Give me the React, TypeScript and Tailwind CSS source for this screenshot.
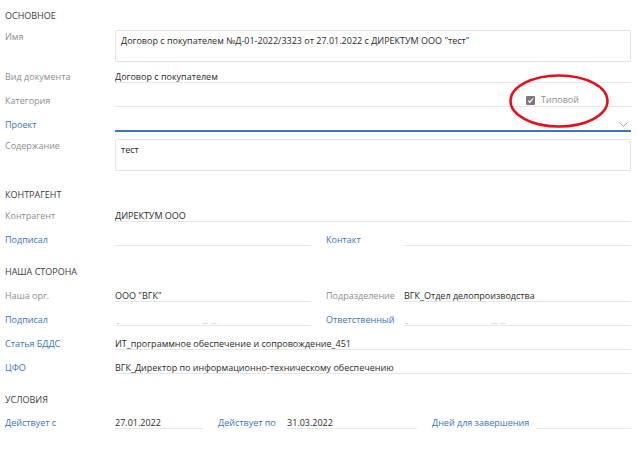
import React from "react";

const font = { fontFamily: '"Open Sans", "Noto Sans", sans-serif' };

interface LabelProp {
    text: string;
    link?: boolean;
    top?: boolean;
    className?: string;
}

const Label: React.FC<LabelProp> = ({ text, link, top, className }) => (
    <div
        className={`shrink-0 leading-[12px] whitespace-nowrap ${top ? "pt-[1px]" : "pt-[6px]"} ${
            link ? "text-[#3a74bb]" : "text-[#8d8d8d]"
        } ${className ?? ""}`}
    >
        {text}
    </div>
);

const Value: React.FC<{ text?: string; className?: string; children?: React.ReactNode }> = ({ text, className, children }) => (
    <div className={`h-[18px] pt-[6px] leading-[12px] border-b border-[#e8e8e8] text-[#2a2a2a] whitespace-nowrap overflow-hidden ${className ?? ""}`}>
        {text}
        {children}
    </div>
);

const Header: React.FC<{ text: string; className?: string }> = ({ text, className }) => (
    <div className={`h-[12px] leading-[12px] text-[#3c3c3c] uppercase ${className ?? ""}`}>{text}</div>
);

const Row: React.FC<{ label: string; link?: boolean; value?: string; children?: React.ReactNode }> = ({ label, link, value, children }) => (
    <div className="flex h-[24px]">
        <Label text={label} link={link} className="w-[110px]" />
        {children ?? <Value text={value} className="flex-1" />}
    </div>
);

const Masked: React.FC = () => (
    <div className="flex items-end gap-[3px] h-[10px] pl-[2px]">
        <span className="w-[2px] h-[1px] bg-[#d0d0d0]" />
        <span className="ml-[80px] w-[6px] h-[1px] bg-[#e0e0e0]" />
        <span className="w-[6px] h-[1px] bg-[#e0e0e0]" />
    </div>
);

const App: React.FC = () => {
    return (
        <div className="relative w-[638px] h-[451px] bg-white text-[9px] pl-[5px] pr-[7px] pt-[10px] overflow-hidden" style={font}>
            {/* Основное */}
            <Header text="Основное" />
            <div className="flex mt-[8px]">
                <Label text="Имя" top className="w-[110px]" />
                <div className="flex-1 h-[32px] border border-[#e3e3e3] rounded-[2px] px-[5px] pt-[4px] leading-[12px] text-[#2a2a2a]">
                    Договор с покупателем №Д-01-2022/3323 от 27.01.2022 с ДИРЕКТУМ ООО "тест"
                </div>
            </div>
            <div className="mt-[3px]">
                <Row label="Вид документа" value="Договор с покупателем" />
                <Row label="Категория">
                    <Value className="flex-1 flex justify-end pr-[52px]">
                        <span className="flex items-center gap-[6px] text-[#8d8d8d] -mt-[1px]">
                            <span className="w-[9px] h-[9px] bg-[#7a7a7a] rounded-[1px] flex items-center justify-center">
                                <svg width="7" height="7" viewBox="0 0 8 8" fill="none">
                                    <path d="M1.3 4.2 L3.2 6 L6.8 1.8" stroke="white" strokeWidth="1.4" />
                                </svg>
                            </span>
                            Типовой
                        </span>
                    </Value>
                </Row>
                <Row label="Проект" link>
                    <div className="flex-1 relative h-[19px] border-b-2 border-[#3a74bb]">
                        <svg className="absolute right-[3px] top-[9px]" width="9" height="5" viewBox="0 0 9 5" fill="none">
                            <path d="M0.5 0.5 L4.5 4.3 L8.5 0.5" stroke="#9aa3ad" strokeWidth="1" />
                        </svg>
                    </div>
                </Row>
            </div>
            <div className="flex mt-[2px]">
                <Label text="Содержание" top className="w-[110px]" />
                <div className="flex-1 h-[32px] border border-[#e3e3e3] rounded-[2px] px-[5px] pt-[4px] leading-[12px] text-[#2a2a2a]">
                    тест
                </div>
            </div>

            {/* Контрагент */}
            <Header text="Контрагент" className="mt-[18px]" />
            <div className="mt-[3px]">
                <Row label="Контрагент" value="ДИРЕКТУМ ООО" />
                <Row label="Подписал" link>
                    <Value className="w-[196px]" />
                    <Label text="Контакт" link className="w-[78px] ml-[15px]" />
                    <Value className="flex-1" />
                </Row>
            </div>

            {/* Наша сторона */}
            <Header text="Наша сторона" className="mt-[14px]" />
            <div className="mt-[6px]">
                <Row label="Наша орг.">
                    <Value text={'ООО "ВГК"'} className="w-[196px]" />
                    <Label text="Подразделение" className="w-[78px] ml-[15px]" />
                    <Value text="ВГК_Отдел делопроизводства" className="flex-1" />
                </Row>
                <Row label="Подписал" link>
                    <Value className="w-[196px]">
                        <Masked />
                    </Value>
                    <Label text="Ответственный" link className="w-[78px] ml-[15px]" />
                    <Value className="flex-1">
                        <Masked />
                    </Value>
                </Row>
                <Row label="Статья БДДС" link value="ИТ_программное обеспечение и сопровождение_451" />
                <Row label="ЦФО" link value="ВГК_Директор по информационно-техническому обеспечению" />
            </div>

            {/* Условия */}
            <Header text="Условия" className="mt-[14px]" />
            <div className="mt-[5px] flex h-[24px]">
                <Label text="Действует с" link className="w-[110px]" />
                <Value text="27.01.2022" className="w-[88px]" />
                <Label text="Действует по" link className="w-[69px] ml-[15px]" />
                <Value text="31.03.2022" className="w-[130px]" />
                <Label text="Дней для завершения" link className="w-[105px] ml-[15px]" />
                <Value className="flex-1" />
            </div>

            {/* пометка поверх формы */}
            <svg className="absolute left-[508px] top-[73px]" width="102" height="56" viewBox="0 0 102 56" fill="none">
                <ellipse cx="51" cy="28" rx="48.5" ry="25.5" stroke="#e3101c" strokeWidth="2.5" />
            </svg>
        </div>
    );
};

export default App;
